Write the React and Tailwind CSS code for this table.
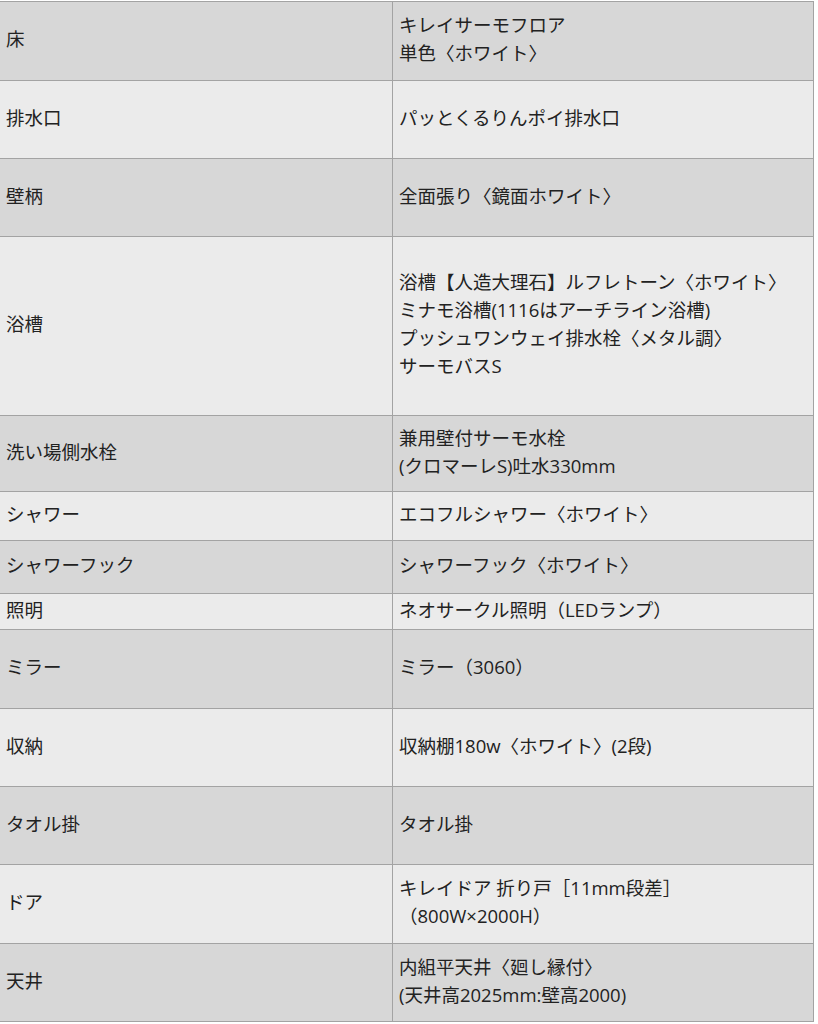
import React from "react";

const rows = [
  { k: "床", v: ["キレイサーモフロア", "単色〈ホワイト〉"], h: "h-[79px]", dark: true },
  { k: "排水口", v: ["パッとくるりんポイ排水口"], h: "h-[78px]", dark: false },
  { k: "壁柄", v: ["全面張り〈鏡面ホワイト〉"], h: "h-[78px]", dark: true },
  {
    k: "浴槽",
    v: [
      "浴槽【人造大理石】ルフレトーン〈ホワイト〉",
      "ミナモ浴槽(1116はアーチライン浴槽)",
      "プッシュワンウェイ排水栓〈メタル調〉",
      "サーモバスS",
    ],
    h: "h-[179px]",
    dark: false,
  },
  { k: "洗い場側水栓", v: ["兼用壁付サーモ水栓", "(クロマーレS)吐水330mm"], h: "h-[76px]", dark: true },
  { k: "シャワー", v: ["エコフルシャワー〈ホワイト〉"], h: "h-[49px]", dark: false },
  { k: "シャワーフック", v: ["シャワーフック〈ホワイト〉"], h: "h-[53px]", dark: true },
  { k: "照明", v: ["ネオサークル照明（LEDランプ）"], h: "h-[36px]", dark: false },
  { k: "ミラー", v: ["ミラー（3060）"], h: "h-[79px]", dark: true },
  { k: "収納", v: ["収納棚180w〈ホワイト〉(2段)"], h: "h-[78px]", dark: false },
  { k: "タオル掛", v: ["タオル掛"], h: "h-[78px]", dark: true },
  { k: "ドア", v: ["キレイドア 折り戸［11mm段差］", "（800W×2000H）"], h: "h-[79px]", dark: false },
  { k: "天井", v: ["内組平天井〈廻し縁付〉", "(天井高2025mm:壁高2000)"], h: "h-[78px]", dark: true },
];

export default function App() {
  return (
    <div
      className="w-[818px] min-h-[1024px] bg-white pt-px text-[#222] text-[18.5px] leading-[28px]"
      style={{ fontFamily: '"Open Sans", "Noto Sans CJK JP", sans-serif' }}
    >
      <div className="w-[814px] border-t border-r border-[#a3a3a3]">
        {rows.map((r, i) => (
          <div
            key={i}
            className={`grid grid-cols-[393px_1fr] border-b border-[#a3a3a3] ${r.h} ${
              r.dark ? "bg-[#d7d7d7]" : "bg-[#ebebeb]"
            }`}
          >
            <div className="flex items-center pl-[6px] pb-[4px] border-r border-[#a3a3a3]">
              <span>{r.k}</span>
            </div>
            <div className="flex flex-col justify-center pl-[6px] pb-[4px]">
              {r.v.map((line, j) => (
                <div key={j} className="whitespace-nowrap">
                  {line}
                </div>
              ))}
            </div>
          </div>
        ))}
      </div>
    </div>
  );
}
